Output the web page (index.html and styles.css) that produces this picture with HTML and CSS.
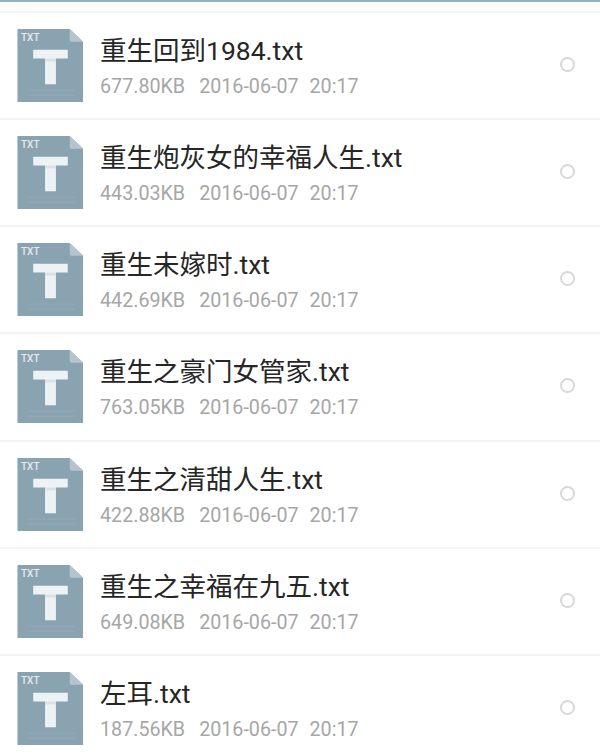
FILE: index.html
```html
<!DOCTYPE html>
<html lang="zh">
<head>
  <meta charset="UTF-8" />
  <title>文件列表</title>
  <link rel="stylesheet" href="styles.css">
</head>
<body>
  <svg width="0" height="0" class="defs">
    <symbol id="txt-icon" viewBox="0 0 67 74">
      <path d="M0 0H53L66.500 13V74H0Z" fill="#8aa3b1"/>
      <path d="M53 0L66.500 13H55Q53 13 53 11Z" fill="#b4c5ce"/>
      <path d="M16 21H51V30H39V56H28V30H16Z" fill="#edf3f5"/>
      <path d="M28 30H39V33H28Z" fill="#d9e3e7"/>
      <path d="M10 62H58M10 67H58" stroke="#94abb8" stroke-width="1"/>
    </symbol>
  </svg>

  <div class="topbar"></div>

  <div class="list">
    <div class="row">
      <svg class="icon"><use href="#txt-icon"/><text x="4" y="12" class="icon-label">TXT</text></svg>
      <div class="info">
        <div class="name">重生回到1984.txt</div>
        <div class="meta"><span>677.80KB</span><span>2016-06-07</span><span>20:17</span></div>
      </div>
      <div class="radio"></div>
    </div>
    <div class="row">
      <svg class="icon"><use href="#txt-icon"/><text x="4" y="12" class="icon-label">TXT</text></svg>
      <div class="info">
        <div class="name">重生炮灰女的幸福人生.txt</div>
        <div class="meta"><span>443.03KB</span><span>2016-06-07</span><span>20:17</span></div>
      </div>
      <div class="radio"></div>
    </div>
    <div class="row">
      <svg class="icon"><use href="#txt-icon"/><text x="4" y="12" class="icon-label">TXT</text></svg>
      <div class="info">
        <div class="name">重生未嫁时.txt</div>
        <div class="meta"><span>442.69KB</span><span>2016-06-07</span><span>20:17</span></div>
      </div>
      <div class="radio"></div>
    </div>
    <div class="row">
      <svg class="icon"><use href="#txt-icon"/><text x="4" y="12" class="icon-label">TXT</text></svg>
      <div class="info">
        <div class="name">重生之豪门女管家.txt</div>
        <div class="meta"><span>763.05KB</span><span>2016-06-07</span><span>20:17</span></div>
      </div>
      <div class="radio"></div>
    </div>
    <div class="row">
      <svg class="icon"><use href="#txt-icon"/><text x="4" y="12" class="icon-label">TXT</text></svg>
      <div class="info">
        <div class="name">重生之清甜人生.txt</div>
        <div class="meta"><span>422.88KB</span><span>2016-06-07</span><span>20:17</span></div>
      </div>
      <div class="radio"></div>
    </div>
    <div class="row">
      <svg class="icon"><use href="#txt-icon"/><text x="4" y="12" class="icon-label">TXT</text></svg>
      <div class="info">
        <div class="name">重生之幸福在九五.txt</div>
        <div class="meta"><span>649.08KB</span><span>2016-06-07</span><span>20:17</span></div>
      </div>
      <div class="radio"></div>
    </div>
    <div class="row">
      <svg class="icon"><use href="#txt-icon"/><text x="4" y="12" class="icon-label">TXT</text></svg>
      <div class="info">
        <div class="name">左耳.txt</div>
        <div class="meta"><span>187.56KB</span><span>2016-06-07</span><span>20:17</span></div>
      </div>
      <div class="radio"></div>
    </div>
  </div>
</body>
</html>
```

FILE: styles.css
```css
html, body {
  height: 754px;
  overflow: hidden;
}

body {
  margin: 0;
  font-family: Roboto, "Noto Sans CJK SC", sans-serif;
  background: #fff;
}

.defs {
  display: block;
  height: 0;
}

/* top edge left over from the title bar */
.topbar {
  height: 11px;
  box-sizing: border-box;
  border-top: 2px solid #8fb4bf;
  background: #fbfdfc;
}

.row {
  display: flex;
  align-items: flex-start;
  height: 107.17px;
  box-sizing: border-box;
  border-top: 2px solid #f3f3f3;
  padding: 16px 25px 0 17px;
}

.icon {
  flex: none;
  width: 67px;
  height: 73px;
}

.icon-label {
  font-size: 10px;
  font-weight: 500;
  fill: #e4ecef;
}

.info {
  flex: 1;
  margin-left: 16px;
  min-width: 0;
}

.name {
  margin-top: 4px;
  font-size: 26.5px;
  line-height: 36px;
  color: #262626;
  white-space: nowrap;
}

.meta {
  display: flex;
  margin-top: 4px;
  font-size: 19.7px;
  line-height: 28px;
  color: #a6a6a6;
}

.meta span:first-child {
  margin-right: 14px;
}

.meta span:nth-child(2) {
  margin-right: 11px;
}

.radio {
  flex: none;
  width: 15px;
  height: 15px;
  box-sizing: border-box;
  margin-top: 28px;
  border: 2px solid #d8d8d8;
  border-radius: 50%;
}
```
